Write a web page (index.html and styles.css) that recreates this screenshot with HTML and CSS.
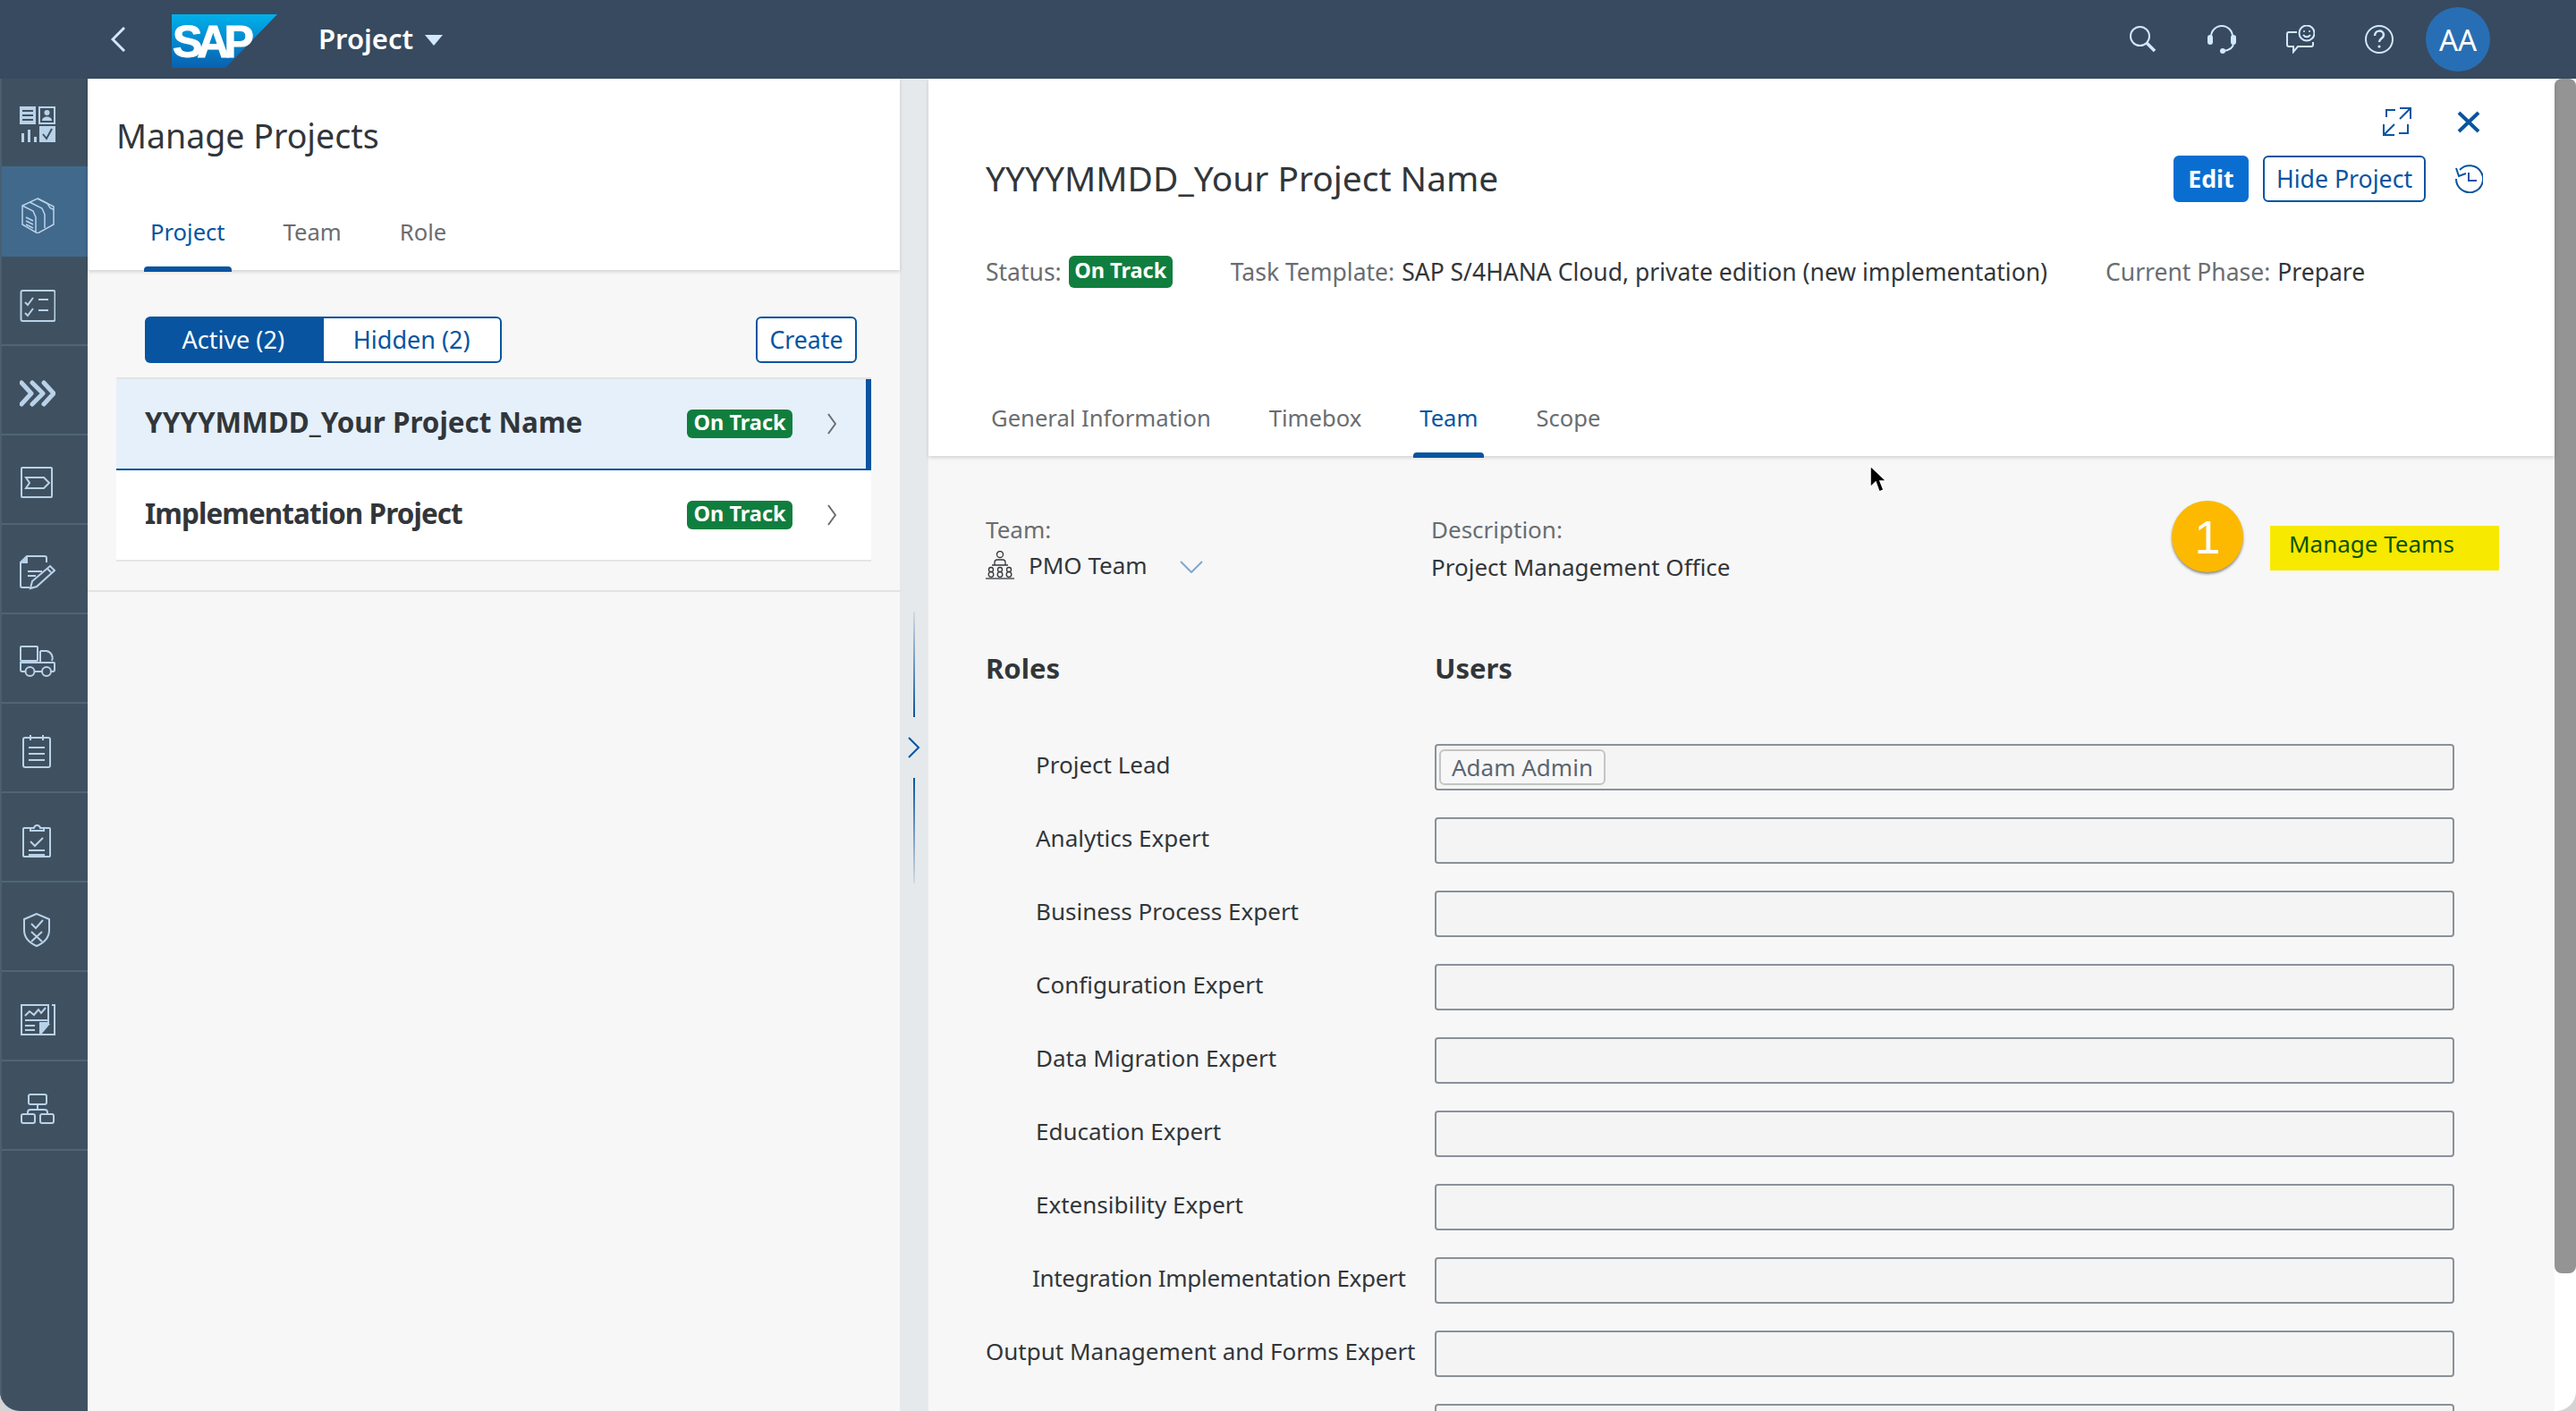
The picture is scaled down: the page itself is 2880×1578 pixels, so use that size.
FILE: index.html
```html
<!DOCTYPE html>
<html lang="en">

<head>
  <meta charset="UTF-8">
  <title>Manage Projects</title>
  <link rel="stylesheet" href="styles.css">
</head>

<body>
  <div class="app">
    <header class="shell">
      <svg class="back" viewBox="0 0 16 28"><path d="M15 1 2 14l13 13"/></svg>
      <svg class="logo" viewBox="0 0 118 60">
        <defs>
          <linearGradient id="sapblue" x1="0" y1="0" x2="0" y2="1">
            <stop offset="0" stop-color="#00b1eb"/>
            <stop offset="1" stop-color="#0a60b0"/>
          </linearGradient>
        </defs>
        <polygon points="0,0 118,0 60,60 0,60" fill="url(#sapblue)"/>
        <text x="1" y="48" class="logo-text">SAP</text>
      </svg>
      <div class="app-title">Project</div>
      <span class="caret"></span>
      <div class="shell-icons">
        <svg class="shell-icon" viewBox="0 0 32 32"><circle cx="12.5" cy="12.5" r="10.5"/><path d="m20 20 9 9" stroke-width="3.5"/></svg>
        <svg class="shell-icon" viewBox="0 0 32 32"><path d="M4 15V13a12 12 0 0 1 24 0v2M29 20c0 5-4 8-11 9"/><rect x="0" y="11" width="6" height="11" rx="3" class="solid"/><rect x="26" y="11" width="6" height="11" rx="3" class="solid"/><circle cx="17" cy="29" r="3" class="solid"/></svg>
        <svg class="shell-icon" viewBox="0 0 32 32"><path d="M12 8H3a2 2 0 0 0-2 2v12a2 2 0 0 0 2 2h5v6l5-6h15a2 2 0 0 0 2-2v-3"/><circle cx="23" cy="9" r="8.5"/><circle cx="20" cy="7" r="1" class="solid"/><circle cx="26" cy="7" r="1" class="solid"/><path d="M19 11c2 3 6 3 8 0"/></svg>
        <svg class="shell-icon" viewBox="0 0 32 32"><circle cx="16" cy="16" r="15"/><path d="M11 12c0-7 10-7 10-1 0 4-5 4-5 8" stroke-width="2.5"/><circle cx="16" cy="24" r="1.6" class="solid"/></svg>
        <div class="avatar">AA</div>
      </div>
    </header>

    <div class="workspace">
      <nav class="sidenav">
        <div class="nav-item nav-first">
          <svg class="nav-icon" viewBox="0 0 40 40">
            <rect x="0" y="0" width="18" height="20" class="solid"/>
            <path d="M3 5h12M3 10h12M3 15h12" class="cut"/>
            <rect x="22" y="1" width="17" height="18"/>
            <circle cx="30.500" cy="7" r="3" class="solid"/>
            <path d="M25 16c0-6 11-6 11 0z" class="solid"/>
            <path d="M2 40V30h3v10zM9 40V26h3v14zM16 40v-6h3v6z" class="solid"/>
            <rect x="22" y="22" width="18" height="18" class="solid"/>
            <path d="m26 31 4 5 6-11" class="cut"/>
          </svg>
        </div>
        <div class="nav-item nav-active">
          <svg class="nav-icon" viewBox="0 0 40 40">
            <path d="M20 1 38 10v20L20 40 3 30V9z"/>
            <path d="M3 9l12 6 3 7v17"/>
            <path d="M11 5l14 7 3 7v15"/>
            <path d="M20 1l11 5.500 3 5 4 2"/>
            <path d="M7 22l8 4M7 26l8 4M7 30l8 4"/>
          </svg>
        </div>
        <div class="nav-item">
          <svg class="nav-icon" viewBox="0 0 40 40">
            <rect x="1.500" y="5" width="38" height="34" rx="2"/>
            <path d="m6 18 3 3 6-8M6 30l3 3 6-8M21 15h11M21 27h11"/>
          </svg>
        </div>
        <div class="nav-item">
          <svg class="nav-icon" viewBox="0 0 40 40">
            <path d="M2 8l11 12L2 32M14 8l12 12-12 12M27 8l11 12-11 12" class="bold"/>
          </svg>
        </div>
        <div class="nav-item">
          <svg class="nav-icon" viewBox="0 0 40 40">
            <rect x="2" y="3" width="34" height="33" rx="1"/>
            <path d="M7 14h20l6 6-6 6H7l4-6z"/>
          </svg>
        </div>
        <div class="nav-item">
          <svg class="nav-icon" viewBox="0 0 40 40">
            <path d="M11 37H3a2 2 0 0 1-2-2V9l7-7h20a2 2 0 0 1 2 2v5"/>
            <path d="M1 10l8-8v8z" class="solid"/>
            <path d="M9 19h16M9 24h9"/>
            <path d="m12 38 2-8 20-17 5 5-20 18zM31 16l4 4"/>
          </svg>
        </div>
        <div class="nav-item">
          <svg class="nav-icon" viewBox="0 0 40 40">
            <rect x="1" y="3" width="19" height="16" rx="1"/>
            <path d="M23 8h7a8 8 0 0 1 6 11M23 8v12"/>
            <path d="M6 31H3a2 2 0 0 1-2-2v-8h37a1 1 0 0 1 1 1v7a2 2 0 0 1-2 2h-3M17 31h8"/>
            <circle cx="11.500" cy="31" r="5"/><circle cx="30" cy="31" r="5"/>
          </svg>
        </div>
        <div class="nav-item">
          <svg class="nav-icon" viewBox="0 0 40 40">
            <rect x="4" y="5" width="30" height="33" rx="2"/>
            <path d="M12 2v6M26 2v6M10 16h18M10 23h18M10 30h18"/>
          </svg>
        </div>
        <div class="nav-item">
          <svg class="nav-icon" viewBox="0 0 40 40">
            <path d="M12 6H5a1 1 0 0 0-1 1v30a1 1 0 0 0 1 1h28a1 1 0 0 0 1-1V7a1 1 0 0 0-1-1h-7"/>
            <path d="M12 9V6h4c1-4 6-4 7 0h4v3z"/>
            <path d="m12 21 5 5 9-9M10 31h18M10 36h18"/>
          </svg>
        </div>
        <div class="nav-item">
          <svg class="nav-icon" viewBox="0 0 40 40">
            <path d="M19 2 5 8v12c0 9 7 15 14 18 7-3 14-9 14-18V8z"/>
            <path d="m13 13 5 5 8-9M13 22l12 11M25 22 13 33"/>
          </svg>
        </div>
        <div class="nav-item">
          <svg class="nav-icon" viewBox="0 0 40 40">
            <path d="M36 4h3v33H2V4h30v20H23v13"/>
            <path d="M6 16l5-5 5 4 5-6 3 4 5-6M6 21h26M6 27h11M6 32h11"/>
            <path d="M24 25h10l-10 12z" class="solid"/>
          </svg>
        </div>
        <div class="nav-item">
          <svg class="nav-icon" viewBox="0 0 40 40">
            <rect x="10" y="4" width="20" height="11" rx="2"/>
            <rect x="2" y="26" width="15" height="10" rx="2"/>
            <rect x="23" y="26" width="15" height="10" rx="2"/>
            <path d="M20 15v5M9 26v-2a3 3 0 0 1 3-3h16a3 3 0 0 1 3 3v2"/>
          </svg>
        </div>
      </nav>

      <section class="master">
        <div class="master-head">
          <h1 class="master-title">Manage Projects</h1>
          <div class="tabs tabs-master">
            <span class="tab tab-active">Project</span>
            <span class="tab">Team</span>
            <span class="tab">Role</span>
          </div>
        </div>
        <div class="master-body">
          <div class="list-tools">
            <div class="segmented">
              <span class="seg seg-on">Active (2)</span>
              <span class="seg">Hidden (2)</span>
            </div>
            <span class="btn btn-create">Create</span>
          </div>
          <div class="list">
            <div class="list-row list-row-selected">
              <span class="row-name">YYYYMMDD_Your Project Name</span>
              <span class="badge">On Track</span>
              <svg class="row-chevron" viewBox="0 0 10 24"><path d="m1 1 8 11-8 11"/></svg>
            </div>
            <div class="list-row">
              <span class="row-name row-name-tight">Implementation Project</span>
              <span class="badge">On Track</span>
              <svg class="row-chevron" viewBox="0 0 10 24"><path d="m1 1 8 11-8 11"/></svg>
            </div>
          </div>
        </div>
      </section>

      <div class="splitter">
        <span class="grip grip-top"></span>
        <svg class="grip-arrow" viewBox="0 0 14 24"><path d="m1 1 11 11L1 23"/></svg>
        <span class="grip grip-bottom"></span>
      </div>

      <section class="detail">
        <div class="detail-main">
          <div class="detail-head">
            <div class="head-icons">
              <svg class="head-icon" viewBox="0 0 32 32"><path d="M14 3H4v8M28 19v10H18M19 1h12v12M31 1 19 13M1 19v12h12M1 31l12-12"/></svg>
              <svg class="head-icon" viewBox="0 0 32 32"><path d="m5 6 22 21M27 6 5 27" class="heavy"/></svg>
            </div>
            <div class="title-row">
              <h2 class="detail-title">YYYYMMDD_Your Project Name</h2>
              <div class="title-actions">
                <span class="btn btn-edit">Edit</span>
                <span class="btn btn-hide">Hide Project</span>
                <svg class="head-icon" viewBox="0 0 32 32"><path d="M6 6a15 15 0 1 1-4 10M2 4l3 9 8-3M16 9v9h9"/></svg>
              </div>
            </div>
            <div class="meta-row">
              <div class="meta"><span class="meta-label">Status:</span><span class="badge badge-meta">On Track</span></div>
              <div class="meta"><span class="meta-label">Task Template:</span><span>SAP S/4HANA Cloud, private edition (new implementation)</span></div>
              <div class="meta"><span class="meta-label">Current Phase:</span><span>Prepare</span></div>
            </div>
            <div class="tabs tabs-detail">
              <span class="tab">General Information</span>
              <span class="tab">Timebox</span>
              <span class="tab tab-active">Team</span>
              <span class="tab">Scope</span>
            </div>
          </div>

          <div class="detail-body">
            <div class="team-row">
              <div class="team-col">
                <div class="meta-label">Team:</div>
                <div class="team-select">
                  <svg class="team-icon" viewBox="0 0 32 32">
                    <circle cx="16" cy="4" r="3.500"/>
                    <path d="M10 16v-3a3 3 0 0 1 3-3h6a3 3 0 0 1 3 3v3zM7 16h18"/>
                    <circle cx="6" cy="21" r="2.500"/><circle cx="16" cy="21" r="2.500"/><circle cx="26" cy="21" r="2.500"/>
                    <circle cx="6" cy="26.500" r="2.800"/><circle cx="16" cy="26.500" r="2.800"/><circle cx="26" cy="26.500" r="2.800"/>
                    <path d="M0 31h32"/>
                  </svg>
                  <span>PMO Team</span>
                  <svg class="team-chevron" viewBox="0 0 26 14"><path d="m1 1 12 12L25 1"/></svg>
                </div>
              </div>
              <div class="desc-col">
                <div class="meta-label">Description:</div>
                <div class="desc-value">Project Management Office</div>
              </div>
              <div class="callout">
                <div class="step">1</div>
                <div class="highlight">Manage Teams</div>
              </div>
            </div>

            <div class="roles-head">
              <div>Roles</div>
              <div>Users</div>
            </div>

            <div class="roles">
              <div class="role-label">Project Lead</div>
              <div class="role-input"><span class="chip">Adam Admin</span></div>
              <div class="role-label">Analytics Expert</div>
              <div class="role-input"></div>
              <div class="role-label">Business Process Expert</div>
              <div class="role-input"></div>
              <div class="role-label">Configuration Expert</div>
              <div class="role-input"></div>
              <div class="role-label">Data Migration Expert</div>
              <div class="role-input"></div>
              <div class="role-label">Education Expert</div>
              <div class="role-input"></div>
              <div class="role-label">Extensibility Expert</div>
              <div class="role-input"></div>
              <div class="role-label role-label-mid">Integration Implementation Expert</div>
              <div class="role-input"></div>
              <div class="role-label role-label-wide">Output Management and Forms Expert</div>
              <div class="role-input"></div>
              <div class="role-label"></div>
              <div class="role-input"></div>
            </div>
          </div>
        </div>
        <div class="scrollbar"><div class="thumb"></div></div>
      </section>
    </div>

    <svg class="cursor" viewBox="0 0 20 32"><path d="M1 1v24l6-6 4 11 5-2-4-10h7z"/></svg>
  </div>
</body>

</html>
```

FILE: styles.css
```css
* {
  box-sizing: border-box;
}

html, body {
  margin: 0;
  padding: 0;
  height: 100%;
  overflow: hidden;
  background-color: #d4d4d4;
}

body {
  font-family: 'Noto Sans', sans-serif;
  font-size: 26px;
  color: #32363a;
}

svg {
  display: block;
  flex: none;
  fill: none;
  stroke: currentColor;
  stroke-width: 2;
}

.app {
  position: relative;
  width: 2880px;
  height: 1578px;
  overflow: hidden;
  border-radius: 0 0 22px 22px;
  display: flex;
  flex-direction: column;
}

/* shell bar */
.shell {
  height: 88px;
  flex: none;
  background-color: #374a5f;
  display: flex;
  align-items: center;
  color: #d1e8ff;
}

.back {
  width: 16px;
  height: 28px;
  margin-left: 124px;
  stroke-width: 3;
}

.logo {
  width: 118px;
  height: 60px;
  margin-left: 52px;
  margin-top: 3px;
  stroke: none;
}

.logo-text {
  font-family: 'Liberation Sans', sans-serif;
  font-weight: 700;
  font-size: 50px;
  letter-spacing: -6px;
  fill: #fff;
  stroke: #fff;
  stroke-width: 1;
}

.app-title {
  margin-left: 46px;
  font-size: 31px;
  font-weight: 600;
  margin-top: -2px;
  color: #fff;
}

.caret {
  margin-left: 13px;
  margin-top: 2px;
  border-left: 10px solid transparent;
  border-right: 10px solid transparent;
  border-top: 12px solid #d1e8ff;
}

.shell-icons {
  margin-left: auto;
  margin-right: 96px;
  display: flex;
  align-items: center;
}

.shell-icon {
  width: 32px;
  height: 32px;
  margin-right: 56px;
}

.shell-icon:nth-child(4) {
  margin-right: 36px;
}

.solid {
  fill: currentColor;
  stroke: none;
}

.avatar {
  width: 72px;
  height: 72px;
  border-radius: 50%;
  background-color: #286eb4;
  color: #fff;
  font-size: 33px;
  display: flex;
  align-items: center;
  justify-content: center;
}

/* main area */
.workspace {
  flex: 1;
  display: flex;
  min-height: 0;
}

.sidenav {
  width: 98px;
  flex: none;
  background-color: #3f5161;
  border-left: 2px solid #4a5f72;
  color: #b9d2e8;
}

.nav-item {
  height: 100px;
  border-bottom: 2px solid #4f6577;
  padding: 8px 0 0 20px;
  display: flex;
  align-items: center;
}

.nav-first {
  height: 98px;
  padding-top: 4px;
  border-bottom: 0;
}

.nav-active {
  height: 101px;
  background-color: #41698c;
  border-bottom: 0;
}

.nav-icon {
  width: 40px;
  height: 40px;
}

.nav-active .nav-icon {
  stroke-width: 1.5;
}

.nav-icon .cut {
  stroke: #3f5161;
}

.nav-icon .bold {
  stroke-width: 5;
  stroke-linecap: round;
  stroke-linejoin: round;
}

/* left list */
.master {
  width: 908px;
  flex: none;
  background-color: #f7f7f7;
}

.master-head {
  height: 214px;
  background-color: #fff;
  box-shadow: 0 2px 4px rgba(0, 0, 0, 0.15);
  padding: 39px 0 0 32px;
  display: flex;
  flex-direction: column;
  position: relative;
}

.master-title {
  margin: 0;
  font-size: 37.500px;
  font-weight: 400;
  line-height: 50px;
}

.tabs {
  margin-top: auto;
  display: flex;
  gap: 51px;
  font-size: 25.600px;
  color: #6a6d70;
}

.tabs-master {
  margin-left: 31px;
}

.tab {
  position: relative;
  height: 67px;
  padding: 0 7px;
  line-height: 50px;
}

.tab-active {
  color: #0854a0;
}

.tab-active::after {
  content: '';
  position: absolute;
  left: 0;
  right: 0;
  bottom: -2px;
  height: 6px;
  background-color: #0854a0;
  border-radius: 4px 4px 0 0;
}

.master-body {
  padding-top: 52px;
  height: 360px;
  border-bottom: 2px solid #e3e3e3;
}

.list-tools {
  height: 52px;
  margin: 0 48px 0 64px;
  display: flex;
  justify-content: space-between;
}

.segmented {
  display: flex;
  width: 399px;
  font-size: 27px;
}

.seg {
  flex: 1;
  border: 2px solid #0854a0;
  border-left: 0;
  border-radius: 0 6px 6px 0;
  background-color: #fff;
  color: #0854a0;
  text-align: center;
  line-height: 48px;
}

.seg-on {
  background-color: #0854a0;
  color: #fff;
  border-radius: 6px 0 0 6px;
}

.btn {
  height: 52px;
  border: 2px solid #0854a0;
  border-radius: 6px;
  background-color: #fff;
  color: #0854a0;
  font-size: 26.700px;
  line-height: 47px;
  text-align: center;
}

.btn-create {
  width: 113px;
}

.list {
  margin: 16px 32px 0;
  border-top: 2px solid #e3e3e3;
}

.list-row {
  height: 102px;
  background-color: #fff;
  border-bottom: 2px solid #e5e5e5;
  display: flex;
  align-items: center;
  padding: 0 39px 0 32px;
}

.list-row-selected {
  background-color: #e5f0fa;
  border-bottom-color: #0854a0;
  border-right: 6px solid #0854a0;
  padding-right: 33px;
}

.row-name {
  font-size: 31.400px;
  font-weight: 700;
  line-height: 40px;
  margin-top: -4px;
}

.row-name-tight {
  letter-spacing: -0.9px;
}

.badge {
  margin-left: auto;
  width: 118px;
  height: 32px;
  border-radius: 6px;
  background-color: #107e3e;
  color: #fff;
  font-size: 23.500px;
  font-weight: 700;
  line-height: 29px;
  text-align: center;
}

.row-chevron {
  width: 10px;
  height: 24px;
  margin-left: 39px;
  color: #6a6d70;
}

/* splitter */
.splitter {
  width: 32px;
  flex: none;
  background-color: #e6e9eb;
  display: flex;
  flex-direction: column;
  align-items: center;
  padding-top: 596px;
}

.grip {
  width: 2px;
  height: 118px;
}

.grip-top {
  background: linear-gradient(to bottom, #d3dbe3, #0854a0);
}

.grip-bottom {
  background: linear-gradient(to top, #d3dbe3, #0854a0);
}

.grip-arrow {
  width: 14px;
  height: 24px;
  margin: 22px 0;
  color: #0854a0;
}

/* right detail */
.detail {
  flex: 1;
  display: flex;
  min-width: 0;
}

.detail-main {
  flex: 1;
  min-width: 0;
  background-color: #f7f7f7;
}

.detail-head {
  height: 422px;
  background-color: #fff;
  box-shadow: 0 2px 4px rgba(0, 0, 0, 0.15);
  padding: 32px 80px 0 64px;
  display: flex;
  flex-direction: column;
  position: relative;
}

.head-icons {
  display: flex;
  justify-content: flex-end;
  gap: 48px;
}

.head-icon {
  width: 32px;
  height: 32px;
  color: #0854a0;
}

.head-icon .heavy {
  stroke-width: 4;
}

.title-row {
  margin-top: 22px;
  height: 52px;
  display: flex;
  align-items: center;
  justify-content: space-between;
}

.detail-title {
  margin: 0;
  font-size: 38.900px;
  font-weight: 400;
  line-height: 50px;
  margin-top: -2px;
}

.title-actions {
  display: flex;
  align-items: center;
  gap: 16px;
}

.title-actions .head-icon {
  margin-left: 16px;
}

.btn-edit {
  width: 84px;
  background-color: #0a6ed1;
  border-color: #0a6ed1;
  color: #fff;
  font-weight: 700;
}

.btn-hide {
  width: 182px;
}

.meta-row {
  margin-top: 60px;
  height: 36px;
  display: flex;
  align-items: center;
  gap: 65px;
  font-size: 26.500px;
}

.meta {
  display: flex;
  align-items: center;
  gap: 8px;
}

.meta-label {
  color: #6a6d70;
}

.badge-meta {
  width: 116px;
  height: 36px;
  line-height: 32px;
}

.tabs-detail {
  margin-left: -1px;
}

.detail-body {
  padding: 50px 62px 0 64px;
}

.team-row {
  display: flex;
  height: 80px;
}

.team-col {
  width: 498px;
  padding-top: 14px;
  line-height: 36px;
}

.team-select {
  margin-top: 4px;
  display: flex;
  align-items: center;
}

.team-icon {
  width: 32px;
  height: 32px;
  stroke-width: 1.3;
}

.team-select span {
  margin-left: 16px;
}

.team-chevron {
  width: 26px;
  height: 14px;
  margin-left: 36px;
  margin-top: 4px;
  color: #7fa8d1;
}

.desc-col {
  padding-top: 14px;
  line-height: 36px;
}

.desc-value {
  margin-top: 6px;
}

.callout {
  margin-left: auto;
  display: flex;
  gap: 30px;
}

.step {
  width: 80px;
  height: 80px;
  border-radius: 50%;
  background-color: #fdb900;
  box-shadow: 0 2px 3px rgba(0, 0, 0, 0.45);
  color: #fff;
  font-family: 'Liberation Sans', sans-serif;
  font-size: 52px;
  line-height: 82px;
  text-align: center;
}

.highlight {
  width: 256px;
  height: 50px;
  margin-top: 28px;
  padding-left: 21px;
  background-color: #f7e900;
  color: #0a5200;
  line-height: 40px;
}

.roles-head {
  margin-top: 87px;
  display: grid;
  grid-template-columns: 502px 1fr;
  font-size: 31px;
  font-weight: 700;
  line-height: 40px;
}

.roles {
  margin-top: 65px;
  display: grid;
  grid-template-columns: 502px 1140px;
  row-gap: 30px;
}

.role-label {
  padding-left: 56px;
  line-height: 46px;
}

.role-label-mid {
  padding-left: 52px;
  letter-spacing: -0.3px;
}

.role-label-wide {
  padding-left: 0;
  white-space: nowrap;
}

.role-input {
  height: 52px;
  border: 2px solid #89919a;
  border-radius: 4px;
  background-color: #f4f4f4;
  padding: 4px 3px;
  display: flex;
}

.chip {
  height: 40px;
  padding: 0 12px;
  border: 2px solid #c4c4c4;
  border-radius: 6px;
  background-color: #f7f7f7;
  color: #5b6670;
  line-height: 36px;
}

.scrollbar {
  width: 24px;
  flex: none;
  background-color: #fff;
}

.thumb {
  height: 1336px;
  border-radius: 8px;
  background-color: #949494;
}

.cursor {
  position: absolute;
  left: 2090px;
  top: 520px;
  width: 20px;
  height: 32px;
  fill: #000;
  stroke: #fff;
  stroke-width: 1.5;
}
```
